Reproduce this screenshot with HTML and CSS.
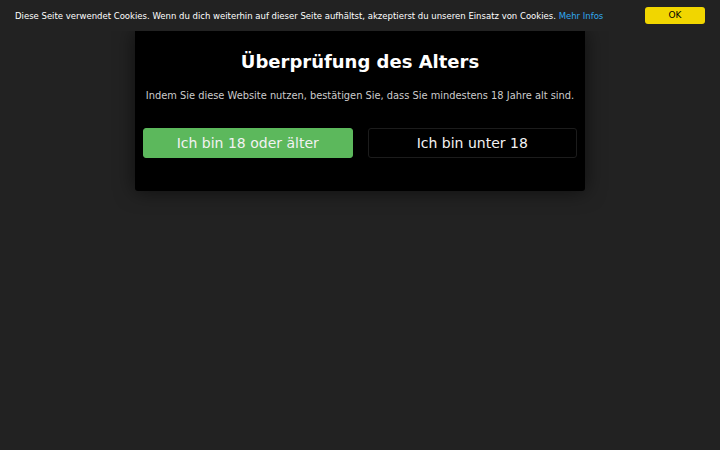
FILE: index.html
```
<!DOCTYPE html>
<html lang="de">
<head>
<meta charset="utf-8">
<title>Altersprüfung</title>
<link rel="stylesheet" href="styles.css">
</head>
<body>
<div class="cookie-bar">
  <span class="cookie-text">Diese Seite verwendet Cookies. Wenn du dich weiterhin auf dieser Seite aufhältst, akzeptierst du unseren Einsatz von Cookies. <a class="cookie-link" href="#">Mehr Infos</a></span>
  <a class="cookie-ok" href="#">OK</a>
</div>
<div class="modal">
  <h1 class="modal-title">Überprüfung des Alters</h1>
  <p class="modal-text">Indem Sie diese Website nutzen, bestätigen Sie, dass Sie mindestens 18 Jahre alt sind.</p>
  <div class="modal-buttons">
    <button class="btn btn-yes">Ich bin 18 oder älter</button>
    <button class="btn btn-no">Ich bin unter 18</button>
  </div>
</div>
</body>
</html>
```
FILE: styles.css
```
html, body {
  margin: 0;
  padding: 0;
  height: 100%;
}
body {
  background: #222222;
  font-family: "DejaVu Sans", sans-serif;
  color: #fff;
}
.cookie-bar {
  position: relative;
  z-index: 2;
  height: 31px;
  background: #222222;
  display: flex;
  align-items: center;
  justify-content: space-between;
  padding: 0 15px;
  box-sizing: border-box;
}
.cookie-text {
  font-size: 8.5px;
  color: #ffffff;
  white-space: nowrap;
}
.cookie-link {
  color: #31a8f0;
  text-decoration: none;
}
.cookie-ok {
  display: block;
  flex-shrink: 0;
  width: 60px;
  height: 17px;
  line-height: 17px;
  background: #f1d600;
  color: #000;
  text-align: center;
  font-size: 9px;
  border-radius: 3px;
  text-decoration: none;
}
.modal {
  position: relative;
  z-index: 1;
  width: 450px;
  box-sizing: border-box;
  margin: 0 auto;
  background: #000;
  border-radius: 0 0 3px 3px;
  box-shadow: 0 0 20px rgba(0, 0, 0, 0.6);
  padding: 20px 8px 33px;
  text-align: center;
}
.modal-title {
  margin: 0;
  font-size: 18px;
  font-weight: bold;
  line-height: 22px;
}
.modal-text {
  margin: 16px 0 0;
  font-size: 9.85px;
  line-height: 13px;
  color: #cccccc;
}
.modal-buttons {
  margin-top: 26px;
  display: flex;
  gap: 15px;
}
.btn {
  flex: 1;
  height: 30px;
  border-radius: 3px;
  font-family: "DejaVu Sans", sans-serif;
  font-size: 14px;
  color: #f2f2f2;
  cursor: pointer;
}
.btn-yes {
  background: #5cb85c;
  border: 1px solid #5cb85c;
}
.btn-no {
  background: #000;
  border: 1px solid #1c1c1c;
}
```
